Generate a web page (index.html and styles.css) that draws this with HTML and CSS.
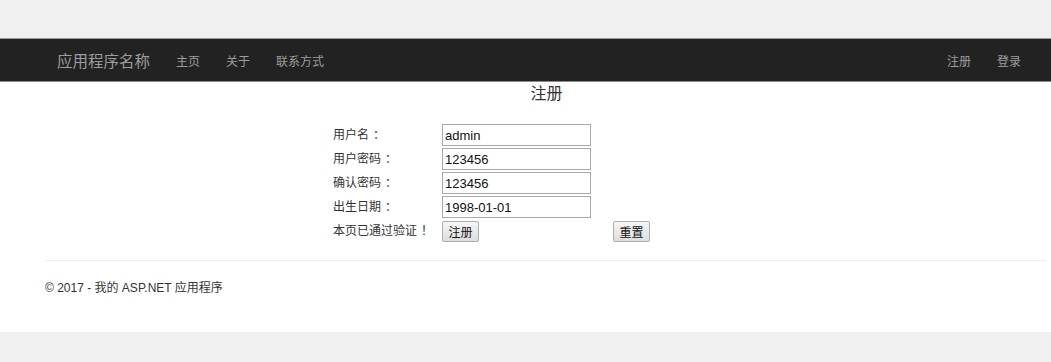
FILE: index.html
```html
<!DOCTYPE html>
<html lang="zh">
<head>
  <meta charset="UTF-8">
  <title>注册 - 我的 ASP.NET 应用程序</title>
  <link rel="stylesheet" href="styles.css">
</head>
<body>
  <div class="page">
    <div class="navbar">
      <div class="nav-left">
        <a class="brand" href="#">应用程序名称</a>
        <a class="nav-link" href="#">主页</a>
        <a class="nav-link" href="#">关于</a>
        <a class="nav-link" href="#">联系方式</a>
      </div>
      <div class="nav-right">
        <a class="nav-link" href="#">注册</a>
        <a class="nav-link" href="#">登录</a>
      </div>
    </div>

    <div class="content">
      <h2 class="title">注册</h2>

      <form class="reg-form" onsubmit="return false;">
        <label for="user">用户名<span class="punct">：</span></label>
        <input type="text" id="user" value="admin">
        <span></span>

        <label for="pwd">用户密码<span class="punct">：</span></label>
        <input type="text" id="pwd" value="123456">
        <span></span>

        <label for="pwd2">确认密码<span class="punct">：</span></label>
        <input type="text" id="pwd2" value="123456">
        <span></span>

        <label for="birth">出生日期<span class="punct">：</span></label>
        <input type="text" id="birth" value="1998-01-01">
        <span></span>

        <span class="msg">本页已通过验证<span class="punct">！</span></span>
        <div><button type="submit">注册</button></div>
        <div><button type="reset">重置</button></div>
      </form>

      <hr class="rule">
      <footer class="footer">© 2017 - 我的 ASP.NET 应用程序</footer>
    </div>
  </div>
</body>
</html>
```

FILE: styles.css
```css
body {
  margin: 0;
  background: #f0f0f0;
  font-family: "Liberation Sans", "Noto Sans CJK SC", sans-serif;
  color: #333;
}
.page {
  padding-top: 38px;
}
.navbar {
  display: flex;
  justify-content: space-between;
  align-items: center;
  height: 42px;
  background: #222;
  border-top: 1px solid #9a9a9a;
  border-bottom: 1px solid #8a8a8a;
}
.nav-left,
.nav-right {
  display: flex;
  align-items: center;
}
.nav-left {
  padding-left: 57px;
}
.nav-right {
  padding-right: 30px;
}
.navbar a {
  color: #9d9d9d;
  text-decoration: none;
}
.brand {
  font-size: 15.5px;
  margin-right: 26px;
}
.nav-link {
  font-size: 12px;
  margin-right: 26px;
}
.nav-right .nav-link {
  margin-right: 0;
  margin-left: 26px;
}
.content {
  background: #fff;
  height: 250px;
  padding-left: 45px;
  padding-right: 5px;
  box-sizing: border-box;
  overflow: hidden;
}
.title {
  margin: 0;
  padding-top: 2px;
  font-size: 16px;
  font-weight: normal;
  text-align: center;
  line-height: 20px;
  padding-left: 2px;
}
.reg-form {
  display: grid;
  grid-template-columns: 109px 171px 37px;
  grid-auto-rows: 22px;
  row-gap: 2px;
  align-items: center;
  margin-top: 20px;
  margin-left: 288px;
  font-size: 12px;
}
.reg-form label,
.reg-form .msg {
  line-height: 22px;
}
.punct {
  display: inline-block;
  padding-left: 4px;
  line-height: 1;
}
.reg-form input[type="text"] {
  width: 149px;
  height: 22px;
  box-sizing: border-box;
  border: 1px solid #a9a9a9;
  padding: 1px 2px;
  font-family: "Liberation Sans", sans-serif;
  font-size: 13px;
  color: #111;
}
.reg-form button {
  height: 21px;
  width: 37px;
  padding: 0;
  font-family: "Liberation Sans", "Noto Sans CJK SC", sans-serif;
  font-size: 12px;
  color: #111;
  background: linear-gradient(#f6f6f6, #dedede);
  border: 1px solid #adadad;
  border-radius: 2px;
}
.rule {
  margin: 18px 0 0;
  border: 0;
  border-top: 1px solid #eee;
}
.footer {
  margin-top: 19px;
  font-size: 12px;
  line-height: 16px;
}
```
